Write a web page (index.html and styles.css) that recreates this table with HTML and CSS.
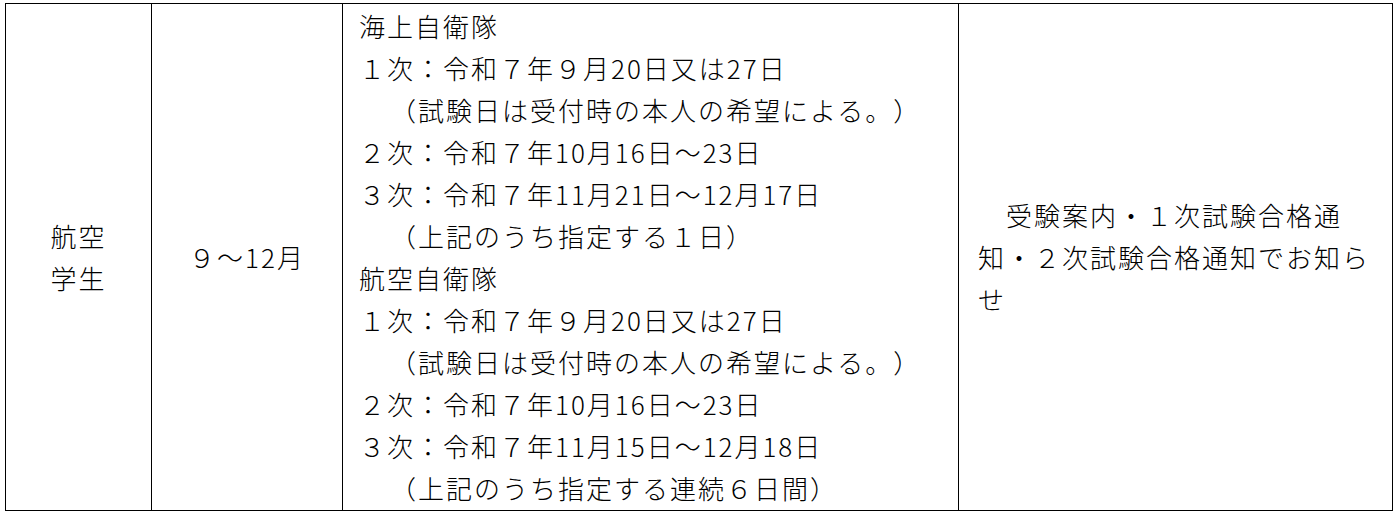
FILE: index.html
```html
<!DOCTYPE html>
<html lang="ja">
<head>
<meta charset="utf-8">
<title>航空学生 試験日程</title>
<link rel="stylesheet" href="styles.css">
</head>
<body>
<table class="schedule">
  <colgroup>
    <col class="c-type">
    <col class="c-month">
    <col class="c-dates">
    <col class="c-notice">
  </colgroup>
  <tr>
    <td class="cell-center">航空<br>学生</td>
    <td class="cell-center">９～12月</td>
    <td class="cell-dates">
      <div class="line">海上自衛隊</div>
      <div class="line">１次：令和７年９月20日又は27日</div>
      <div class="line sub">（試験日は受付時の本人の希望による。）</div>
      <div class="line">２次：令和７年10月16日～23日</div>
      <div class="line">３次：令和７年11月21日～12月17日</div>
      <div class="line sub">（上記のうち指定する１日）</div>
      <div class="line">航空自衛隊</div>
      <div class="line">１次：令和７年９月20日又は27日</div>
      <div class="line sub">（試験日は受付時の本人の希望による。）</div>
      <div class="line">２次：令和７年10月16日～23日</div>
      <div class="line">３次：令和７年11月15日～12月18日</div>
      <div class="line sub">（上記のうち指定する連続６日間）</div>
    </td>
    <td class="cell-notice"><span class="indent">受験案内・１次試験合格通</span><br>知・２次試験合格通知でお知ら<br>せ</td>
  </tr>
</table>
</body>
</html>
```

FILE: styles.css
```css
html, body {
  background: #ffffff;
}

body {
  margin: 3px 0 0 5px;
  font-family: "Noto Sans CJK JP", "Noto Sans", sans-serif;
  font-weight: 300;
  font-size: 26px;
  color: #000000;
  text-spacing-trim: space-all;
}

.schedule {
  border-collapse: collapse;
  table-layout: fixed;
  width: 1387px;
}

.c-type { width: 146px; }
.c-month { width: 191px; }
.c-dates { width: 616px; }
.c-notice { width: 434px; }

.schedule td {
  border: 1px solid #000000;
  padding: 0;
  line-height: 42px;
  vertical-align: middle;
  white-space: nowrap;
  letter-spacing: 2px;
}

.cell-center {
  text-align: center;
}

.schedule .cell-dates {
  padding: 1px 0 1px 16px;
}

.line {
  height: 42px;
}

.sub {
  padding-left: 31px;
}

.schedule .cell-notice {
  padding: 0 0 0 19px;
}

.indent {
  padding-left: 28px;
}
```
